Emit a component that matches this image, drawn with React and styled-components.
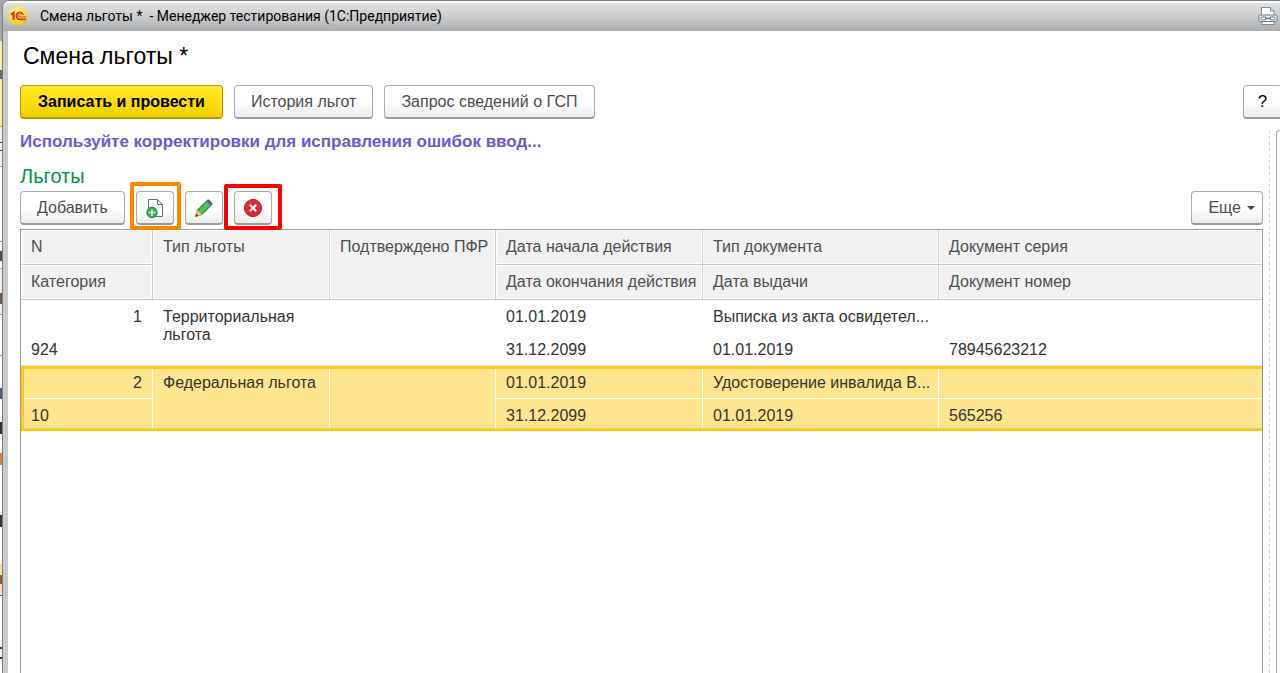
import React, { useState } from "react";
import styled, { createGlobalStyle, css } from "styled-components";

const GlobalStyle = createGlobalStyle`
  * {
    box-sizing: border-box;
  }

  body {
    margin: 0;
    background: #fff;
    font-family: "Liberation Sans", Arial, sans-serif;
    overflow: hidden;
  }
`;

const Desktop = styled.div`
  display: flex;
  min-height: 100vh;
  padding-left: 2px;
  background: linear-gradient(
    #a8a8a8 0 41px,
    #ffec9c 41px 70px,
    #5d6f63 70px 79px,
    #ffec9c 79px 126px,
    #b5a14c 126px 127px,
    #f4f4f4 127px 142px,
    #444 142px 143px,
    #f4f4f4 143px 150px,
    #444 150px 151px,
    #f4f4f4 151px 166px,
    #999 166px 167px,
    #fff 167px 241px,
    #999 241px 242px,
    #fff 242px 251px,
    #5a4634 251px 261px,
    #fff 261px 268px,
    #999 268px 269px,
    #eee 269px 293px,
    #6f5a48 293px 304px,
    #eee 304px 314px,
    #999 314px 315px,
    #fff 315px 355px,
    #999 355px 356px,
    #fff 356px 388px,
    #4a6078 388px 399px,
    #fff 399px 422px,
    #333 422px 434px,
    #fff 434px 453px,
    #c98a45 453px 465px,
    #fff 465px 515px,
    #333 515px 527px,
    #fff 527px 564px,
    #ffdca0 564px 575px,
    #8a5a40 575px 584px,
    #ffdca0 584px 595px,
    #555 595px 596px,
    #fff 596px 647px,
    #333 647px 649px,
    #fff 649px 657px,
    #333 657px 659px,
    #fff 659px
  );
`;

const Window = styled.div`
  flex: 1;
  min-width: 0;
  display: flex;
  flex-direction: column;
  border-top: 1px solid #7f7f7f;
  border-left: 1px solid #7f7f7f;
  border-top-left-radius: 7px;
  background: #fff;
  overflow: hidden;
`;

const TitleBar = styled.header`
  display: flex;
  align-items: center;
  height: 30px;
  padding: 0 2px 2px 5px;
  border-top: 2px solid #fbfbfb;
  background: linear-gradient(#e0e0e0, #d2d3d4 35%, #c2c3c5 65%, #aaabad);
  font-family: Roboto, "Liberation Sans", sans-serif;
  font-size: 14px;
  color: #000;

  svg {
    flex: none;
  }
`;

const TitleText = styled.span`
  flex: 1;
  margin-left: 12px;
  white-space: pre;
`;

const PrintButton = styled.button`
  display: flex;
  padding: 0;
  border: 0;
  background: none;
`;

const Content = styled.div`
  flex: 1;
  display: flex;
  flex-direction: column;
  border-left: 5px solid #c9c9c9;
  padding-left: 12px;
`;

const PageTitle = styled.h1`
  margin: 0;
  padding: 11px 3px 0;
  font-size: 23px;
  line-height: 28px;
  font-weight: 400;
  color: #000;
`;

const CommandBar = styled.div`
  display: flex;
  gap: 11px;
  margin-top: 15px;
`;

const Button = styled.button`
  display: flex;
  align-items: center;
  justify-content: center;
  height: 34px;
  padding: 0 16px;
  border: 1px solid #aaa;
  border-bottom: 2px solid #999;
  border-radius: 4px;
  background: linear-gradient(#fff 50%, #ececec);
  font-family: inherit;
  font-size: 16px;
  color: #4d4d4d;
  white-space: nowrap;

  ${(props) =>
    props.$primary &&
    css`
      padding: 0 17px;
      border-color: #b09b00;
      background: linear-gradient(#ffe82e, #fadc00 60%, #efd000);
      font-weight: 700;
      color: #000;
    `}

  ${(props) =>
    props.$icon &&
    css`
      width: 38px;
      padding: 0;
    `}
`;

const HelpButton = styled(Button)`
  width: 39px;
  margin: 0 -2px 0 auto;
  padding: 0;
  color: #000;
  font-size: 17px;
`;

const Body = styled.div`
  flex: 1;
  display: flex;
  margin-top: 11px;
`;

const Main = styled.main`
  flex: 1;
  min-width: 0;
  display: flex;
  flex-direction: column;
`;

const Hint = styled.p`
  margin: 0;
  font-size: 17px;
  line-height: 24px;
  font-weight: 700;
  color: #6a5acd;
`;

const GroupTitle = styled.h2`
  margin: 10px 0 0;
  font-size: 20px;
  line-height: 24px;
  font-weight: 400;
  color: #009646;
`;

const Toolbar = styled.div`
  display: flex;
  gap: 11px;
  margin-top: 3px;
`;

const Marked = styled.div`
  position: relative;

  &::after {
    content: "";
    position: absolute;
    z-index: 1;
    inset: ${(props) => props.$inset};
    border: 4px solid ${(props) => props.$color};
    border-radius: 2px;
    pointer-events: none;
  }
`;

const MoreButton = styled(Button)`
  gap: 6px;
  margin-left: auto;
  padding: 0 7px 0 16px;
`;

const TableFrame = styled.div`
  flex: 1;
  margin-top: 4px;
  border: 1px solid #999;
  border-bottom: 0;
`;

const Table = styled.table`
  width: 100%;
  table-layout: fixed;
  border-collapse: separate;
  border-spacing: 0;
  font-size: 16px;
  line-height: 18px;
  text-align: left;
`;

const HeadCell = styled.th`
  height: 35px;
  padding: 8px 0 8px 10px;
  border-bottom: 1px solid #c8c8c8;
  border-right: 1px solid #c8c8c8;
  background: #f1f1f1;
  box-shadow: inset 0 0 0 1px #fff;
  font-weight: 400;
  color: #4d4d4d;
  vertical-align: top;
  white-space: nowrap;

  ${(props) => props.$last && "border-right: 0;"}
`;

const Cell = styled.td`
  height: 33px;
  padding: 8px ${(props) => (props.$right ? 10 : 4)}px 0 10px;
  border-right: 1px solid transparent;
  border-bottom: 1px solid transparent;
  color: #333;
  vertical-align: top;
  text-align: ${(props) => (props.$right ? "right" : "left")};
  overflow: hidden;
  text-overflow: ellipsis;
  white-space: ${(props) => (props.$wrap ? "normal" : "nowrap")};

  ${(props) => props.$end && "border-bottom-color: #e2e2e2;"}
`;

const Record = styled.tbody`
  ${(props) =>
    props.$selected &&
    css`
      position: relative;

      &::after {
        content: "";
        position: absolute;
        inset: 0 0 1px;
        border: 3px solid #fbca20;
        border-right: 0;
        pointer-events: none;
      }

      ${Cell} {
        background: #fde58f;
        border-color: #fff;
      }

      ${Cell}:last-child {
        border-right: 0;
      }
    `}
`;

const Splitter = styled.div`
  width: 1px;
  margin: 0 6px;
  background: repeating-linear-gradient(#d0d0d0 0 3px, transparent 3px 6px);
`;

const SidePanel = styled.aside`
  width: 4px;
  border-top: 1px solid #aaa;
  border-left: 1px solid #aaa;
  border-top-left-radius: 4px;
`;

const LogoIcon = () => (
  <svg width="20" height="20" viewBox="0 0 20 20" aria-hidden="true">
    <defs>
      <radialGradient id="logo" cx="40%" cy="30%" r="75%">
        <stop offset="0" stopColor="#fff7a0" />
        <stop offset="0.6" stopColor="#fbe03c" />
        <stop offset="1" stopColor="#e9bf1c" />
      </radialGradient>
    </defs>
    <circle cx="10" cy="10" r="9.5" fill="url(#logo)" />
    <path d="M2.8 8.6 5.6 6.8V14" fill="none" stroke="#e0301e" strokeWidth="2.2" />
    <path
      d="M15 8.6A3.4 3.4 0 1 0 12 13.3H18"
      fill="none"
      stroke="#e0301e"
      strokeWidth="1.8"
    />
    <path d="M13 9.2A1.3 1.3 0 1 0 12 11H18" fill="none" stroke="#e0301e" strokeWidth="1" />
  </svg>
);

const PrintIcon = () => (
  <svg width="20" height="20" viewBox="0 0 20 20" aria-hidden="true">
    <path d="M3.5 11V1.5H12.5L16 5V11" fill="#fff" stroke="#7c8b99" />
    <path d="M12.5 1.5V5H16" fill="#dfe5ea" stroke="#7c8b99" />
    <path d="M4 14V18.5H16V14" fill="#fff" stroke="#7c8b99" />
    <rect x="0.8" y="9" width="18.4" height="6.5" rx="1.5" fill="#eef2f5" stroke="#667889" />
    <rect x="3" y="11" width="5" height="2.8" rx="1" fill="#fff" stroke="#667889" />
    <rect x="12" y="11" width="5" height="2.8" rx="1" fill="#fff" stroke="#667889" />
    <path d="M7 12.4H13" stroke="#667889" strokeWidth="1.4" />
  </svg>
);

const CopyIcon = () => (
  <svg width="20" height="22" viewBox="0 0 20 22" aria-hidden="true">
    <path d="M3.5 12V2.5H12.5L17.5 7.5V19.5H10" fill="#fff" stroke="#5c6f80" />
    <path d="M12.5 2.5V7.5H17.5" fill="none" stroke="#5c6f80" />
    <circle cx="7" cy="15.5" r="5.2" fill="#2fae4b" stroke="#1d8f3a" />
    <path d="M7 12.2V18.8M3.7 15.5H10.3" stroke="#fff" strokeWidth="1.5" />
  </svg>
);

const PencilIcon = () => (
  <svg width="20" height="20" viewBox="0 0 20 20" aria-hidden="true">
    <path d="M1.6 18.4 3.2 11.8 8.2 16.8Z" fill="#f4c65e" stroke="#b98a30" strokeWidth="0.6" />
    <path d="M1.3 18.7 2.1 15.6 4.4 17.9Z" fill="#4a3a2a" />
    <path d="M3.2 11.8 11.8 3.2 16.8 8.2 8.2 16.8Z" fill="#52c063" />
    <path d="M3.2 11.8 11.8 3.2 12.9 4.3 4.3 12.9Z" fill="#349a49" />
    <path d="M15.7 7.1 16.8 8.2 8.2 16.8 7.1 15.7Z" fill="#349a49" />
    <path d="M11.8 3.2 13.2 1.8Q14 1.1 15 1.6L18.2 4.8Q18.9 5.8 18.2 6.8L16.8 8.2Z" fill="#56697c" />
  </svg>
);

const DeleteIcon = () => (
  <svg width="20" height="20" viewBox="0 0 20 20" aria-hidden="true">
    <circle cx="10" cy="10" r="8.6" fill="#dc2b30" stroke="#bd1f26" />
    <path d="M6.8 6.8 13.2 13.2M13.2 6.8 6.8 13.2" stroke="#fff" strokeWidth="2" />
  </svg>
);

const CaretIcon = () => (
  <svg width="8" height="4" viewBox="0 0 8 4" aria-hidden="true">
    <path d="M0 0H8L4 4Z" fill="#444" />
  </svg>
);

const records = [
  {
    n: "1",
    category: "924",
    type: "Территориальная льгота",
    pfr: "",
    start: "01.01.2019",
    end: "31.12.2099",
    docType: "Выписка из акта освидетел...",
    issued: "01.01.2019",
    series: "",
    number: "78945623212",
  },
  {
    n: "2",
    category: "10",
    type: "Федеральная льгота",
    pfr: "",
    start: "01.01.2019",
    end: "31.12.2099",
    docType: "Удостоверение инвалида В...",
    issued: "01.01.2019",
    series: "",
    number: "565256",
  },
];

const BenefitsTable = () => {
  const [selected, setSelected] = useState("2");

  return (
    <Table>
      <colgroup>
        <col width="132" />
        <col width="177" />
        <col width="166" />
        <col width="207" />
        <col width="236" />
        <col />
      </colgroup>
      <thead>
        <tr>
          <HeadCell>N</HeadCell>
          <HeadCell rowSpan={2}>Тип льготы</HeadCell>
          <HeadCell rowSpan={2}>Подтверждено ПФР</HeadCell>
          <HeadCell>Дата начала действия</HeadCell>
          <HeadCell>Тип документа</HeadCell>
          <HeadCell $last>Документ серия</HeadCell>
        </tr>
        <tr>
          <HeadCell>Категория</HeadCell>
          <HeadCell>Дата окончания действия</HeadCell>
          <HeadCell>Дата выдачи</HeadCell>
          <HeadCell $last>Документ номер</HeadCell>
        </tr>
      </thead>
      {records.map((item) => (
        <Record
          key={item.n}
          $selected={item.n === selected}
          onClick={() => setSelected(item.n)}
        >
          <tr>
            <Cell $right>{item.n}</Cell>
            <Cell rowSpan={2} $wrap $end>{item.type}</Cell>
            <Cell rowSpan={2} $end>{item.pfr}</Cell>
            <Cell>{item.start}</Cell>
            <Cell>{item.docType}</Cell>
            <Cell>{item.series}</Cell>
          </tr>
          <tr>
            <Cell $end>{item.category}</Cell>
            <Cell $end>{item.end}</Cell>
            <Cell $end>{item.issued}</Cell>
            <Cell $end>{item.number}</Cell>
          </tr>
        </Record>
      ))}
    </Table>
  );
};

const App = () => {
  return (
    <>
      <GlobalStyle />
      <Desktop>
        <Window>
          <TitleBar>
            <LogoIcon />
            <TitleText>{"Смена льготы *  - Менеджер тестирования (1С:Предприятие)"}</TitleText>
            <PrintButton aria-label="Печать">
              <PrintIcon />
            </PrintButton>
          </TitleBar>
          <Content>
            <PageTitle>Смена льготы *</PageTitle>
            <CommandBar>
              <Button $primary>Записать и провести</Button>
              <Button>История льгот</Button>
              <Button>Запрос сведений о ГСП</Button>
              <HelpButton>?</HelpButton>
            </CommandBar>
            <Body>
              <Main>
                <Hint>Используйте корректировки для исправления ошибок ввод...</Hint>
                <GroupTitle>Льготы</GroupTitle>
                <Toolbar>
                  <Button>Добавить</Button>
                  <Marked $color="#ff8400" $inset="-9px -7px -5px -6px">
                    <Button $icon aria-label="Скопировать">
                      <CopyIcon />
                    </Button>
                  </Marked>
                  <Button $icon aria-label="Изменить">
                    <PencilIcon />
                  </Button>
                  <Marked $color="#ff0000" $inset="-7px -10px -5px -10px">
                    <Button $icon aria-label="Удалить">
                      <DeleteIcon />
                    </Button>
                  </Marked>
                  <MoreButton>
                    Еще
                    <CaretIcon />
                  </MoreButton>
                </Toolbar>
                <TableFrame>
                  <BenefitsTable />
                </TableFrame>
              </Main>
              <Splitter />
              <SidePanel />
            </Body>
          </Content>
        </Window>
      </Desktop>
    </>
  );
};

export default App;
